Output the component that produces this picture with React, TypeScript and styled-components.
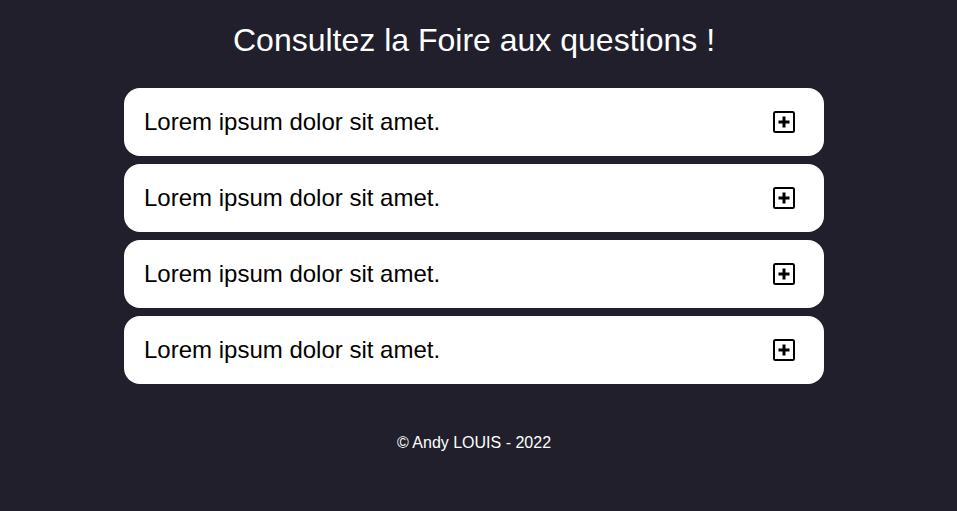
import React from "react";
import styled, { createGlobalStyle } from "styled-components";

const Global = createGlobalStyle`
  html, body { margin: 0; padding: 0; background: #201f2b; }
  body { font-family: "Liberation Sans", Arial, sans-serif; min-height: 511px; }
`;

const Page = styled.main`
  display: flex;
  flex-direction: column;
  align-items: center;
  padding: 22px 9px 0 0;
`;

const Title = styled.h1`
  margin: 0 0 29px;
  font-size: 32px;
  font-weight: 400;
  line-height: 37px;
  color: #ffffff;
`;

const List = styled.section`
  width: 700px;
  display: flex;
  flex-direction: column;
  gap: 8px;
`;

const Item = styled.div`
  height: 68px;
  background: #ffffff;
  border-radius: 16px;
  display: flex;
  align-items: center;
  justify-content: space-between;
  padding: 0 28px 0 20px;
  box-sizing: border-box;
`;

const Question = styled.span`
  font-size: 24px;
  color: #000000;
`;

const Toggle = styled.button`
  border: none;
  background: none;
  padding: 0;
  width: 24px;
  height: 24px;
  display: flex;
  align-items: center;
  justify-content: center;
  cursor: pointer;
`;

const Footer = styled.footer`
  margin-top: 50px;
  font-size: 16px;
  line-height: 18px;
  color: #ffffff;
`;

const PlusSquare = () => (
  <svg width="24" height="24" viewBox="0 0 24 24">
    <rect x="2" y="2" width="20" height="20" rx="1.5" fill="none" stroke="#000" strokeWidth="2" />
    <path d="M12 6.5v11M6.5 12h11" stroke="#000" strokeWidth="3" />
  </svg>
);

export default function App() {
  const items = [1, 2, 3, 4];
  return (
    <>
      <Global />
      <Page>
        <Title>Consultez la Foire aux questions !</Title>
        <List>
          {items.map((i) => (
            <Item key={i}>
              <Question>Lorem ipsum dolor sit amet.</Question>
              <Toggle aria-label="Ouvrir">
                <PlusSquare />
              </Toggle>
            </Item>
          ))}
        </List>
        <Footer>© Andy LOUIS - 2022</Footer>
      </Page>
    </>
  );
}
